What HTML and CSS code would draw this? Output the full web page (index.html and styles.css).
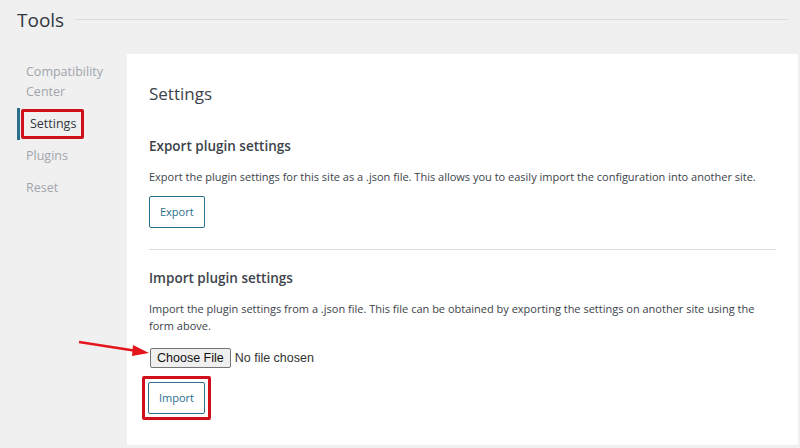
FILE: index.html
```html
<!DOCTYPE html>
<html lang="en">
<head>
	<meta charset="UTF-8">
	<title>Tools</title>
	<link rel="stylesheet" href="styles.css">
</head>
<body>
	<div class="header">
		<h1>Tools</h1>
		<span class="header-line"></span>
	</div>
	<div class="layout">
		<ul class="sidebar">
			<li>Compatibility Center</li>
			<li class="active"><span class="marked">Settings</span></li>
			<li>Plugins</li>
			<li>Reset</li>
		</ul>
		<div class="panel">
			<h2>Settings</h2>
			<div class="section">
				<h3>Export plugin settings</h3>
				<p>Export the plugin settings for this site as a .json file. This allows you to easily import the configuration into another site.</p>
				<a class="btn" href="javascript:">Export</a>
			</div>
			<div class="section last">
				<h3>Import plugin settings</h3>
				<p>Import the plugin settings from a .json file. This file can be obtained by exporting the settings on another site using the form above.</p>
				<div class="file-row">
					<svg class="arrow" width="74" height="20" viewBox="0 0 74 20">
						<line x1="2" y1="3" x2="60" y2="12" stroke="#e3171b" stroke-width="2.4"/>
						<polygon points="72,14 56,6 55,17" fill="#e3171b"/>
					</svg>
					<span class="file-btn">Choose File</span>
					<span class="file-name">No file chosen</span>
				</div>
				<span class="marked-btn"><a class="btn" href="javascript:">Import</a></span>
			</div>
		</div>
	</div>
</body>
</html>
```

FILE: styles.css
```css
html, body {
	margin: 0;
	padding: 0;
	background: #f0f0f1;
}
body {
	font-family: "Open Sans", "Noto Sans", sans-serif;
	color: #3c434a;
	width: 800px;
	height: 448px;
	overflow: hidden;
}
.header {
	display: flex;
	align-items: center;
	padding: 6px 12px 0 17px;
	height: 28px;
}
.header h1 {
	margin: 0;
	font-size: 19px;
	font-weight: 400;
	color: #32373c;
}
.header-line {
	flex: 1;
	margin-left: 11px;
	margin-top: -2px;
	border-top: 1px solid #dcdcde;
}
.layout {
	display: flex;
	margin-top: 20px;
}
.sidebar {
	list-style: none;
	margin: 0;
	padding: 8px 0 0 17px;
	width: 110px;
}
.sidebar li {
	font-size: 12.5px;
	line-height: 20px;
	color: #a0a5aa;
	padding: 0 4px 0 9px;
	margin-bottom: 12px;
	width: 80px;
}
.sidebar li.active {
	border-left: 3px solid #2c6f8c;
	padding: 1px 0;
	margin: -6px 0 6px 0;
	line-height: 18px;
	color: #32373c;
}
.marked {
	display: inline-block;
	margin-left: 1px;
	padding: 3px 5px 3px 6px;
	border: 3px solid #d0111b;
	border-radius: 2px;
}
.panel {
	flex: 1;
	background: #fff;
	margin-right: 2px;
	height: 391px;
	padding: 28px 22px 0 22px;
	box-sizing: border-box;
}
.panel h2 {
	margin: 0 0 32px 0;
	font-size: 17px;
	font-weight: 400;
	color: #3c434a;
}
.section {
	border-bottom: 1px solid #dcdcde;
	padding-bottom: 21px;
	margin-bottom: 19px;
}
.section.last {
	border-bottom: none;
}
.section h3 {
	margin: 0 0 13px 0;
	font-size: 13.5px;
	font-weight: 600;
	color: #3c434a;
}
.section p {
	margin: 0 0 11px 0;
	font-size: 11px;
	line-height: 17px;
	color: #3c434a;
}
.btn {
	display: inline-block;
	font-size: 11px;
	line-height: 30px;
	padding: 0 10px;
	color: #2c6f8c;
	border: 1px solid #2c6f8c;
	border-radius: 2px;
	text-decoration: none;
}
.file-row {
	position: relative;
	display: flex;
	align-items: center;
	margin-top: 14px;
	height: 20px;
}
.arrow {
	position: absolute;
	left: -72px;
	top: -9px;
}
.file-btn {
	font-family: "Liberation Sans", Arial, sans-serif;
	font-size: 12.5px;
	color: #111;
	background: #efefef;
	border: 1px solid #767676;
	border-radius: 2px;
	padding: 1px 6px;
	margin-left: 1px;
	line-height: 16px;
}
.file-name {
	font-family: "Liberation Sans", Arial, sans-serif;
	font-size: 12.5px;
	color: #333;
	margin-left: 4px;
}
.marked-btn {
	display: inline-block;
	margin: 8px 0 0 -7px;
	padding: 3px;
	border: 3px solid #d0111b;
	border-radius: 2px;
}
.marked-btn .btn {
	display: block;
}
```
